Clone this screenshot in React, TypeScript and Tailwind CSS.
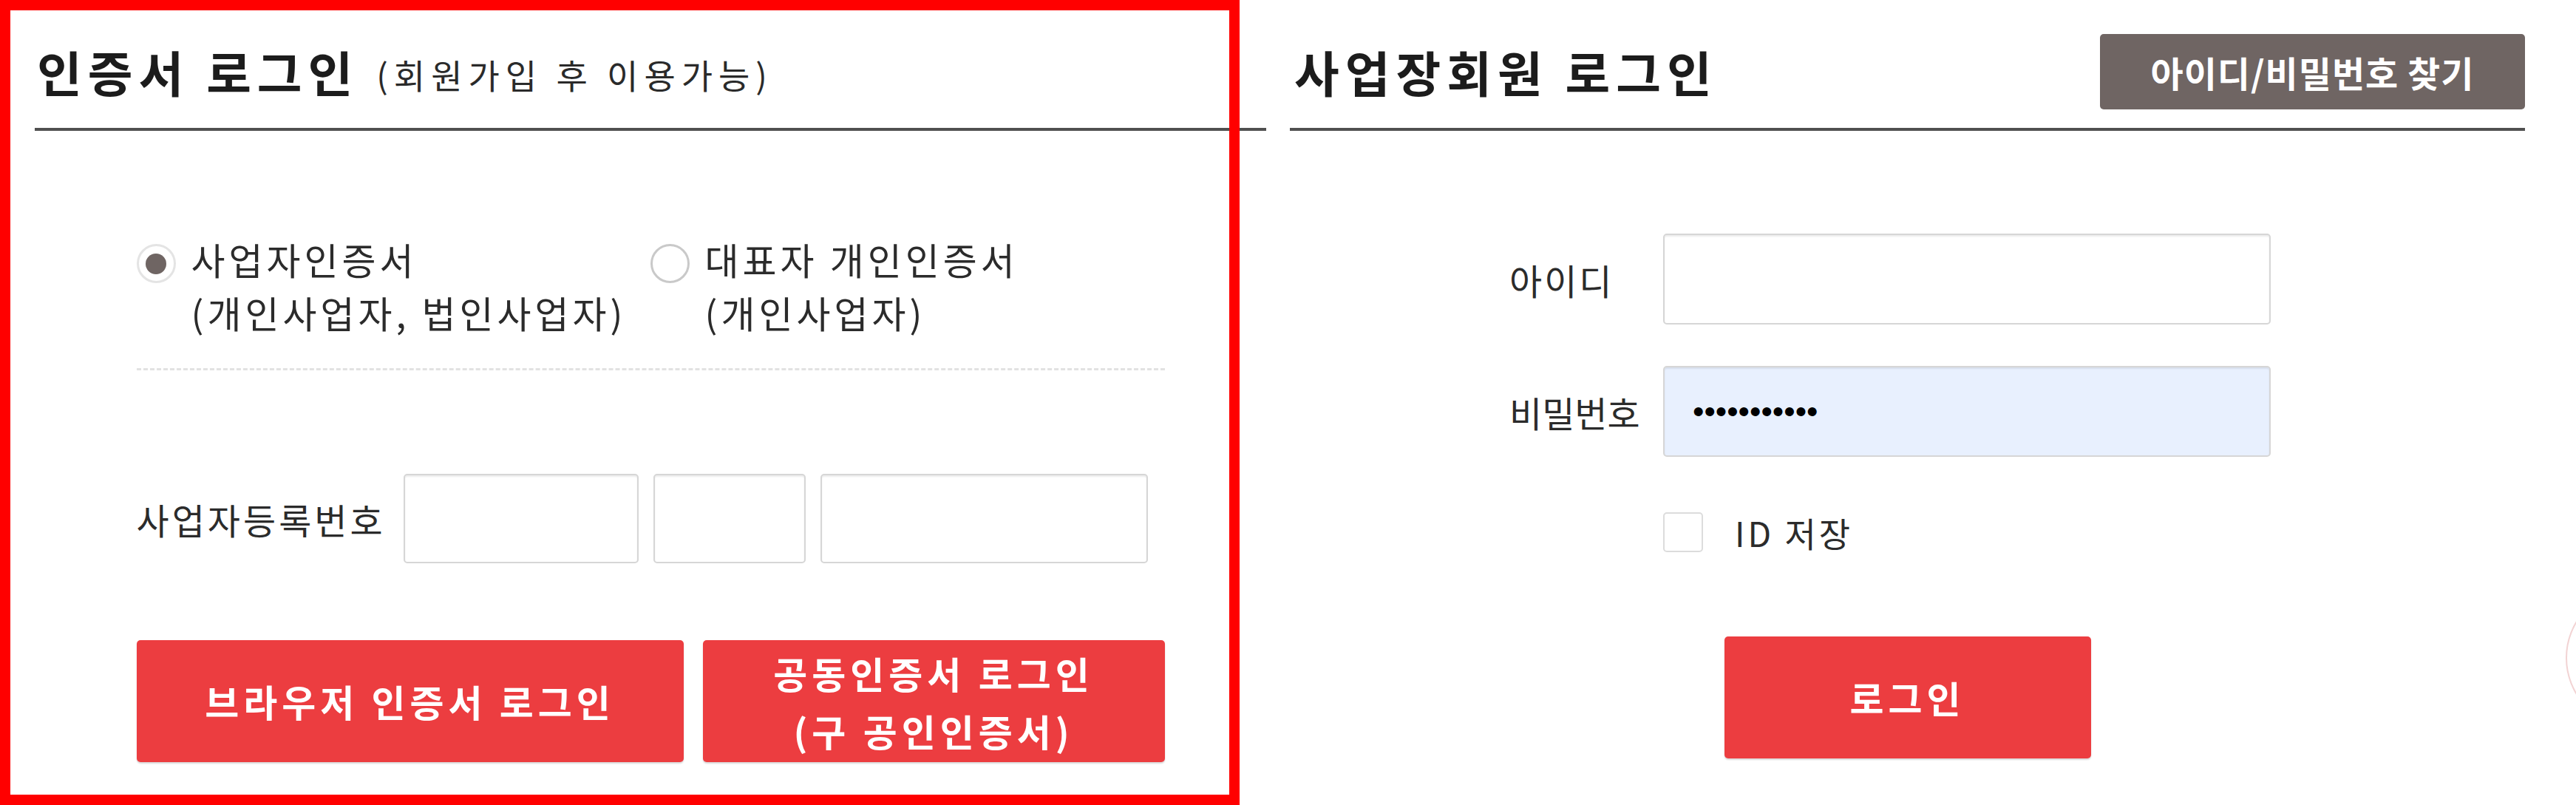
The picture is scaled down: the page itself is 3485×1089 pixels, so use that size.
import React, { useState } from 'react';

const KR = "font-['Noto_Sans_CJK_KR','Noto_Sans',sans-serif]";

type RadioProps = {
  checked: boolean;
  line1: string;
  line2: string;
  onSelect: () => void;
  className?: string;
};

function CertRadio({ checked, line1, line2, onSelect, className }: RadioProps) {
  return (
    <button type="button" onClick={onSelect} className={`flex items-start gap-[21px] text-left ${className ?? ''}`}>
      <span
        className={`mt-[16px] flex h-[53px] w-[53px] shrink-0 items-center justify-center rounded-full border-[3px] bg-white ${
          checked ? 'border-[#e4e4e4]' : 'border-[#c9c9c9]'
        }`}
      >
        {checked && <span className="h-[28px] w-[28px] rounded-full bg-[#6f6563]" />}
      </span>
      <span className="text-[50px] leading-[72px] tracking-[5px] text-[#2b2b2b]">
        {line1}
        <br />
        {line2}
      </span>
    </button>
  );
}

export default function App() {
  const [certType, setCertType] = useState<'biz' | 'ceo'>('biz');
  const [saveId, setSaveId] = useState(false);

  return (
    <div className={`relative h-[1089px] w-[3485px] overflow-hidden bg-white ${KR}`}>
      <div className="flex gap-[32px] pl-[47px] pr-[69px]">
        {/* 인증서 로그인 */}
        <section className="w-[1666px] shrink-0">
          <div className="flex h-[173px] items-center pl-[3px] pt-[20px]">
            <h2 className="text-[66px] font-bold tracking-[8px] text-[#1c1c1c]">인증서 로그인</h2>
            <span className="ml-[24px] mt-[8px] text-[46px] tracking-[8px] text-[#2a2a2a]">(회원가입 후 이용가능)</span>
          </div>
          <div className="h-[4px] bg-[#505050]" />

          <div className="mx-auto w-[1391px]">
            <div className="mt-[137px] flex">
              <CertRadio
                className="w-[695px]"
                checked={certType === 'biz'}
                onSelect={() => setCertType('biz')}
                line1="사업자인증서"
                line2="(개인사업자, 법인사업자)"
              />
              <CertRadio
                checked={certType === 'ceo'}
                onSelect={() => setCertType('ceo')}
                line1="대표자 개인인증서"
                line2="(개인사업자)"
              />
            </div>

            <div className="mt-[40px] border-t-[3px] border-dashed border-[#e2e2e2]" />

            <div className="mt-[140px] flex h-[121px] items-center">
              <span className="w-[361px] text-[48px] tracking-[4px] text-[#2b2b2b]">사업자등록번호</span>
              <div className="flex h-full gap-[20px]">
                <input className="h-full w-[318px] rounded-[5px] border-2 border-[#d6d6d6] shadow-[inset_0_2px_2px_rgba(0,0,0,0.08)] outline-none" />
                <input className="h-full w-[206px] rounded-[5px] border-2 border-[#d6d6d6] shadow-[inset_0_2px_2px_rgba(0,0,0,0.08)] outline-none" />
                <input className="h-full w-[443px] rounded-[5px] border-2 border-[#d6d6d6] shadow-[inset_0_2px_2px_rgba(0,0,0,0.08)] outline-none" />
              </div>
            </div>

            <div className="mt-[104px] flex h-[165px] gap-[26px]">
              <button className="w-[740px] rounded-[5px] bg-[#ec3d40] text-[50px] font-bold tracking-[6px] text-white shadow-[0_2px_2px_rgba(0,0,0,0.15)]">
                브라우저 인증서 로그인
              </button>
              <button className="w-[625px] rounded-[5px] bg-[#ec3d40] text-[50px] font-bold leading-[78px] tracking-[6px] text-white shadow-[0_2px_2px_rgba(0,0,0,0.15)]">
                공동인증서 로그인
                <br />
                (구 공인인증서)
              </button>
            </div>
          </div>
        </section>

        {/* 사업장회원 로그인 */}
        <section className="w-[1671px] shrink-0">
          <div className="flex h-[173px] items-center justify-between pl-[6px] pt-[20px]">
            <h2 className="text-[66px] font-bold tracking-[8px] text-[#1c1c1c]">사업장회원 로그인</h2>
            <button className="h-[102px] w-[575px] rounded-[5px] bg-[#6f6563] text-[48px] font-bold tracking-[1px] text-white">
              아이디/비밀번호 찾기
            </button>
          </div>
          <div className="h-[4px] bg-[#505050]" />

          <div className="pl-[297px]">
            <div className="mt-[139px] flex items-center">
              <label className="w-[208px] shrink-0 text-left text-[48px] tracking-[3px] text-[#2b2b2b]">아이디</label>
              <input className="h-[123px] w-[822px] shrink-0 rounded-[5px] border-2 border-[#d6d6d6] px-[40px] text-[44px] shadow-[inset_0_2px_2px_rgba(0,0,0,0.08)] outline-none" />
            </div>
            <div className="mt-[56px] flex items-center">
              <label className="w-[208px] shrink-0 text-left text-[48px] text-[#2b2b2b]">비밀번호</label>
              <input
                type="password"
                readOnly
                value="passwordsav"
                className="h-[123px] w-[822px] shrink-0 rounded-[5px] border-2 border-[#d6d6d6] bg-[#e8f0fe] px-[38px] font-['Liberation_Sans',sans-serif] text-[44px] text-black shadow-[inset_0_2px_2px_rgba(0,0,0,0.08)] outline-none"
              />
            </div>
            <div className="mt-[75px] flex h-[54px] items-center">
              <span className="w-[208px] shrink-0" />
              <button
                type="button"
                onClick={() => setSaveId(!saveId)}
                className="flex h-[54px] items-center gap-[43px]"
              >
                <span className="h-[54px] w-[54px] rounded-[5px] border-2 border-[#dcdcdc] bg-white" />
                <span className="text-[46px] leading-none tracking-[4px] text-[#2b2b2b]">ID 저장</span>
              </button>
            </div>
          </div>

          <div className="mt-[114px] flex justify-center">
            <button className="h-[165px] w-[496px] rounded-[5px] bg-[#ec3d40] text-[50px] font-bold tracking-[6px] text-white shadow-[0_2px_2px_rgba(0,0,0,0.15)]">
              로그인
            </button>
          </div>
        </section>
      </div>

      {/* floating round button peeking from the right edge */}
      <div className="absolute left-[3471px] top-[795px] h-[190px] w-[190px] rounded-full border-2 border-[#f2d3d3] bg-white" />

      {/* red highlight box */}
      <div className="pointer-events-none absolute left-0 top-0 h-[1089px] w-[1677px] border-[14px] border-[#ff0000]" />
    </div>
  );
}
